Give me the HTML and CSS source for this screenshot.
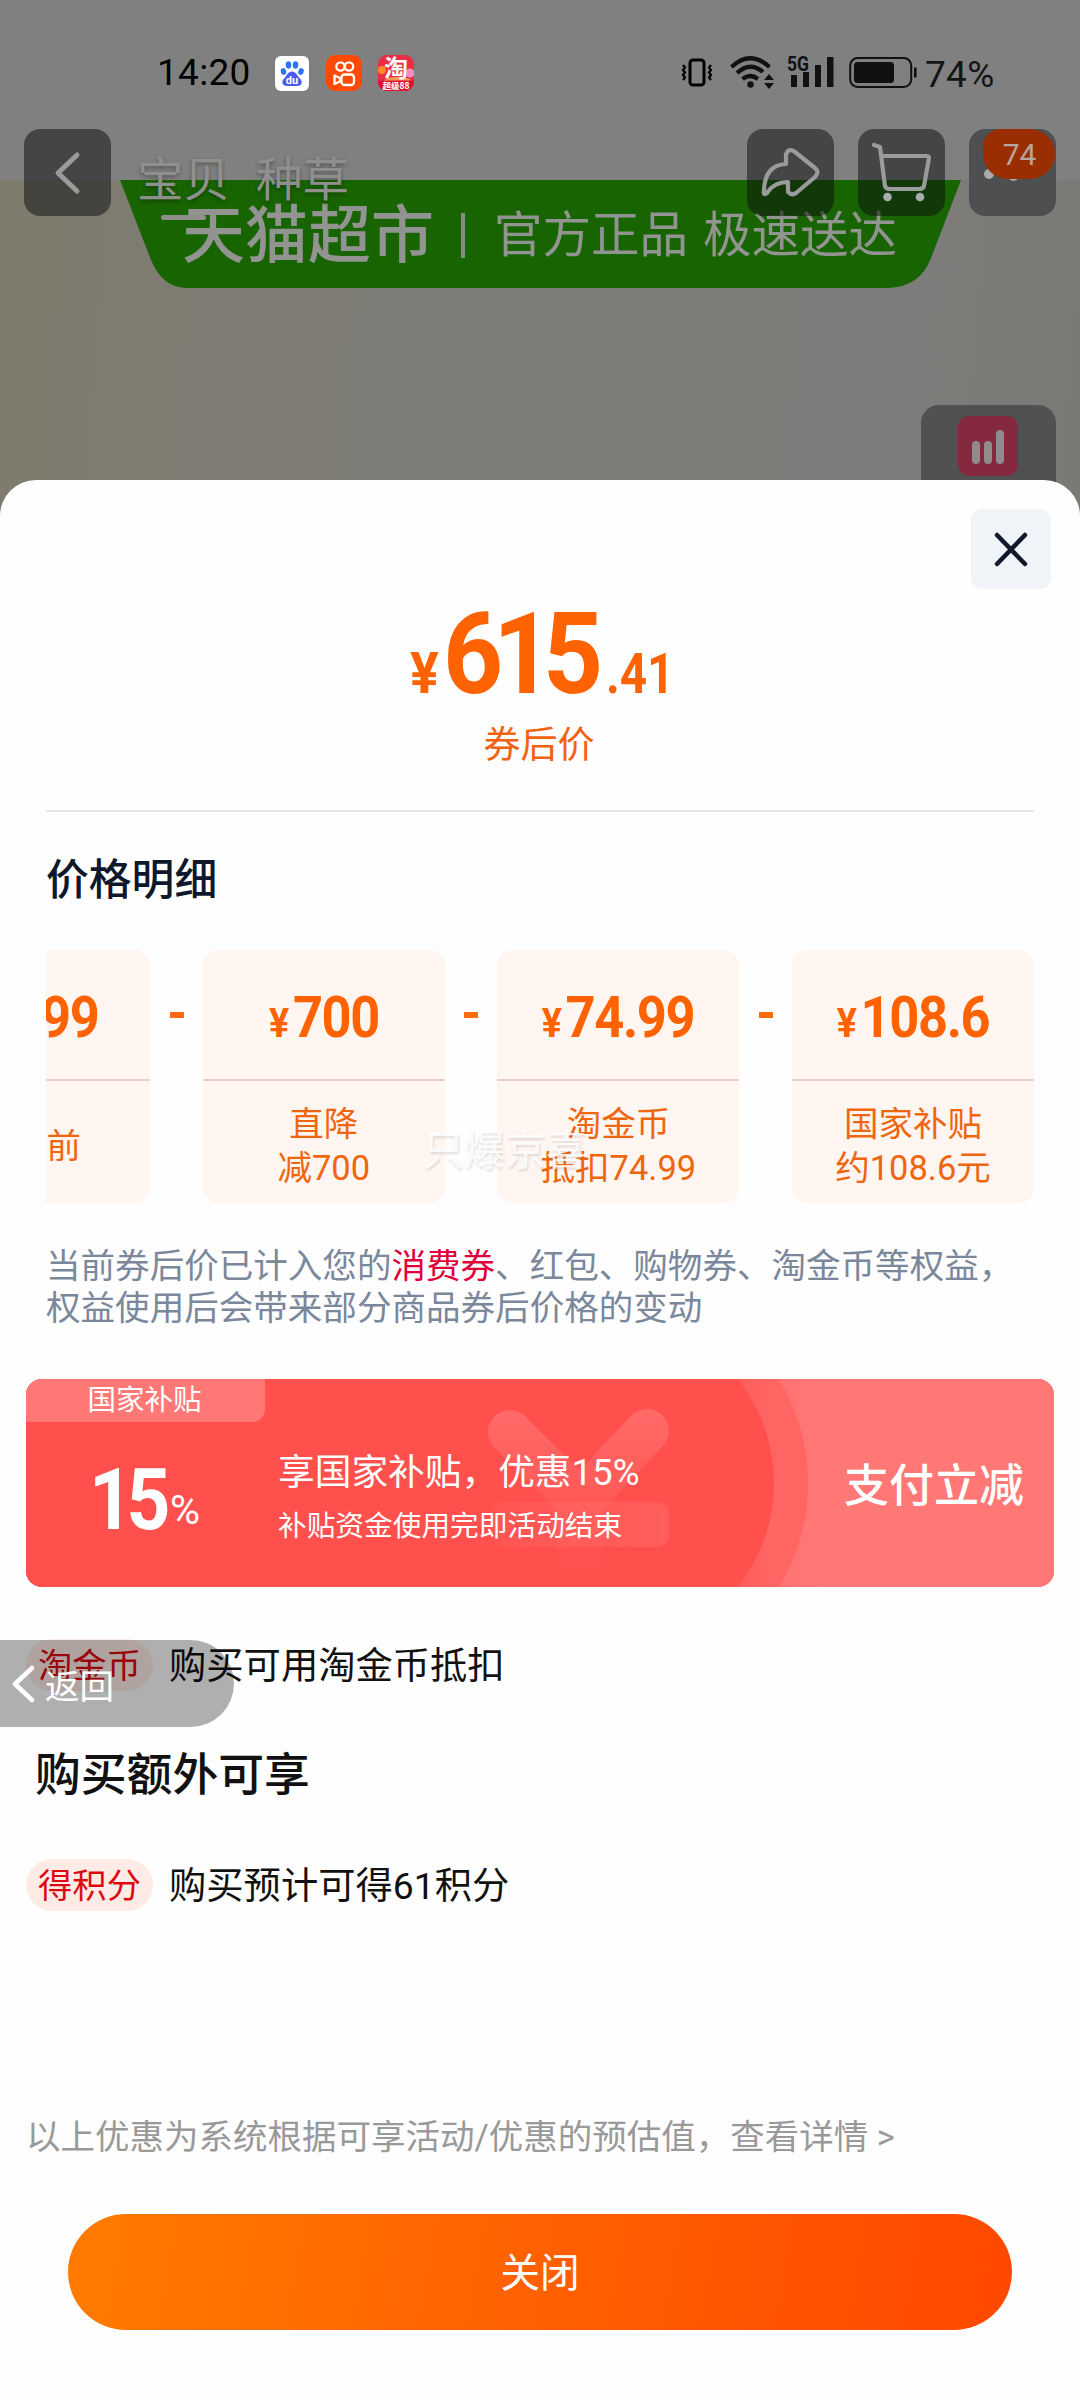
FILE: index.html
```html
<!DOCTYPE html>
<html lang="zh-CN">
<head>
<meta charset="utf-8">
<title>价格明细</title>
<link rel="stylesheet" href="styles.css">
</head>
<body>
<div class="screen">
  <div class="product-image">
    <svg class="ribbon" width="841" height="108" viewBox="0 0 841 108"><path d="M0 0H841L811 78Q800 107 768 108H66Q42 107 31 80Z"/></svg>
    <div class="ribbon-text"><span class="ribbon-brand">天猫超市</span><i class="ribbon-rule"></i><span class="ribbon-slogan">官方正品<b></b>极速送达</span></div>
  </div>

  <div class="float-tool">
    <svg width="60" height="60" viewBox="0 0 60 60"><rect width="60" height="60" rx="11" fill="#85293f"/><path d="M18 29V44M30 29V44M42 18V44" stroke="#918b8d" stroke-width="8" stroke-linecap="round"/></svg>
  </div>

  <header class="status">
    <span class="clock">14:20</span>
    <svg class="app app-baidu" width="34" height="35" viewBox="0 0 34 35"><rect width="34" height="35" rx="6" fill="#fff"/><g fill="#2f74f0"><ellipse cx="8.500" cy="15.500" rx="2.700" ry="3.400" transform="rotate(-15 8.500 15.500)"/><ellipse cx="13.500" cy="9" rx="2.800" ry="3.700"/><ellipse cx="20.500" cy="9" rx="2.800" ry="3.700"/><ellipse cx="26" cy="15.500" rx="2.700" ry="3.400" transform="rotate(15 26 15.500)"/></g><path d="M17 15.500c4 0 5 4 7.500 6.500 4 4 2 8-2 8H12c-4.500 0-6.500-4-2.500-8 2.500-2.500 3.500-6.500 7.500-6.500z" fill="#4a5cf0"/><text x="17" y="28" text-anchor="middle" class="baidu-text">du</text></svg>
    <svg class="app app-kuaishou" width="36" height="36" viewBox="0 0 36 36"><rect width="36" height="36" rx="9" fill="#ff4a06"/><g fill="none" stroke="#fff" stroke-width="2.300"><circle cx="14.500" cy="11.500" r="4.200"/><circle cx="23" cy="11.500" r="4.200"/><rect x="15.500" y="19.500" width="12.500" height="10.500" rx="3"/><path d="M8.500 20.500v8.500l5.500-2.500v-3.500z" stroke-linejoin="round"/></g></svg>
    <svg class="app" width="36" height="36" viewBox="0 0 36 36"><defs><clipPath id="tb"><rect width="36" height="36" rx="9"/></clipPath></defs><g clip-path="url(#tb)"><rect width="36" height="36" fill="#ea2f45"/><circle cx="4" cy="15" r="4" fill="#ff8a1e"/><circle cx="32" cy="18" r="4.500" fill="#f58ac8"/><path d="M6 25q12-6 26-1v3H6z" fill="#ff9c4a"/><rect y="25.500" width="36" height="11" fill="#de1230"/></g><text x="18" y="21.500" text-anchor="middle" class="tao-text">淘</text><text x="18" y="34" text-anchor="middle" class="tao-sub">超级88</text></svg>

    <svg class="vibrate" width="32" height="30" viewBox="0 0 32 30"><rect x="9" y="2" width="14" height="25" rx="3" fill="none" stroke="#000" stroke-width="3"/><path d="M2 7l2 2.500-2 2.500 2 2.500-2 2.500 2 2.500-2 2.500M30 7l-2 2.500 2 2.500-2 2.500 2 2.500-2 2.500 2 2.500" fill="none" stroke="#000" stroke-width="2.200"/></svg>
    <svg class="wifi" width="45" height="34" viewBox="0 0 45 34"><g fill="none" stroke="#111" stroke-width="4.200"><path d="M1.500 12Q20 -5.500 39.500 12"/><path d="M7 18Q20 6 33 17"/><path d="M12.500 24Q20 18 28 24"/></g><circle cx="20.500" cy="29.500" r="3.200" fill="#111"/><path d="M34 25l5-6 5 6zM34 28h10l-5 6z" fill="#111"/></svg>
    <svg class="signal" width="48" height="34" viewBox="0 0 48 34"><text x="0" y="16.500" class="net-text" textLength="22" lengthAdjust="spacingAndGlyphs">5G</text><path d="M4 21h6v12H4zM16 18h6v15h-6zM28 11h6v22h-6zM40 3h6.500v30H40z" fill="#111"/></svg>
    <svg class="battery" width="68" height="32" viewBox="0 0 68 32"><rect x="1.200" y="2" width="61" height="29" rx="7.500" fill="none" stroke="#111" stroke-width="2"/><rect x="5" y="6" width="40" height="21" rx="3.500" fill="#111"/><path d="M65 11.500h2.600v10H65z" fill="#111"/></svg>
    <span class="level">74%</span>
  </header>

  <nav class="nav">
    <div class="nav-btn"><svg width="87" height="87" viewBox="0 0 87 87"><path d="M53 26L34 44L53 62" class="line thick"/></svg></div>
    <div class="tabs"><span class="tab active">宝贝</span><span class="tab">种草</span></div>
    <div class="nav-btn"><svg width="87" height="87" viewBox="0 0 87 87"><path d="M41 22Q44 20 48 23L68 39Q73 43 68 48L49 64Q45 67 41 63V53Q27 53 20 64Q16 67 17 61Q18 36 39 35V25Z" class="line"/></svg></div>
    <div class="nav-btn"><svg width="87" height="87" viewBox="0 0 87 87"><path d="M16 16L22 18L27 57Q28 60 32 60H61Q65 60 66 57L71 29Q71 27 68 27H24" class="line"/><circle cx="29.500" cy="68" r="4.300" class="dot"/><circle cx="62" cy="68" r="4.300" class="dot"/></svg></div>
    <div class="nav-btn more"><svg width="87" height="87" viewBox="0 0 87 87"><circle cx="20" cy="45" r="5" class="dot"/><circle cx="44.500" cy="47" r="5" class="dot"/></svg><span class="badge">74</span></div>
  </nav>

  <main class="sheet">
    <button class="close-x"><svg width="81" height="80" viewBox="0 0 81 80"><path d="M26 26L54 55M54 26L26 55"/></svg></button>

    <section class="total">
      <div class="price"><span class="price-yen">¥</span><span class="price-int">615</span><span class="price-dec">.41</span></div>
      <div class="price-label">券后价</div>
    </section>

    <h2 class="detail-title">价格明细</h2>
    <div class="cards">
      <div class="card"><div class="num"><small>¥</small><span>1499</span></div><div class="desc">优惠前</div></div>
      <i class="minus"></i>
      <div class="card"><div class="num"><small>¥</small><span>700</span></div><div class="desc">直降<br>减700</div></div>
      <i class="minus"></i>
      <div class="card"><div class="num"><small>¥</small><span>74.99</span></div><div class="desc">淘金币<br>抵扣74.99</div></div>
      <i class="minus"></i>
      <div class="card"><div class="num"><small>¥</small><span>108.6</span></div><div class="desc">国家补贴<br>约108.6元</div></div>
    </div>
    <p class="note">当前券后价已计入您的<em>消费券</em>、红包、购物券、淘金币等权益，<br>权益使用后会带来部分商品券后价格的变动</p>

    <section class="coupon">
      <svg class="coupon-art" width="1028" height="208" viewBox="0 0 1028 208">
        <defs>
          <linearGradient id="ring" x1="0" x2="1"><stop offset=".72" stop-color="#ff5250"/><stop offset=".9" stop-color="#ff6563"/></linearGradient>
          <linearGradient id="side" x1="0" x2="1"><stop offset="0" stop-color="#ff6c6a"/><stop offset=".3" stop-color="#ff7876"/></linearGradient>
          <linearGradient id="mark" gradientUnits="userSpaceOnUse" x1="520" y1="30" x2="520" y2="200"><stop offset="0" stop-color="#fff" stop-opacity=".15"/><stop offset=".6" stop-color="#fff" stop-opacity=".04"/><stop offset="1" stop-color="#fff" stop-opacity="0"/></linearGradient>
          <linearGradient id="bar" x1="0" x2="1"><stop offset="0" stop-color="#fff" stop-opacity=".03"/><stop offset="1" stop-color="#fff" stop-opacity=".08"/></linearGradient>
        </defs>
        <rect x="700" width="328" height="208" fill="url(#side)"/>
        <circle cx="582" cy="104" r="200" fill="url(#ring)"/>
        <circle cx="581" cy="104" r="167" fill="#ff504e"/>
        <rect width="560" height="208" fill="#ff504e"/>
        <path d="M484 53L554 123L621 52M554 123V208" fill="none" stroke="url(#mark)" stroke-width="44" stroke-linecap="round" stroke-linejoin="round"/>
        <rect x="466" y="123" width="177" height="45" rx="12" fill="url(#bar)"/>
      </svg>
      <div class="coupon-left"><span class="coupon-tab">国家补贴</span><div class="rate"><b>15</b><span>%</span></div></div>
      <div class="coupon-mid"><div class="coupon-main">享国家补贴，优惠15%</div><div class="coupon-sub">补贴资金使用完即活动结束</div></div>
      <div class="coupon-right">支付立减</div>
    </section>

    <div class="perk"><span class="tag">淘金币</span><span class="perk-text">购买可用淘金币抵扣</span></div>
    <h2 class="extra-title">购买额外可享</h2>
    <div class="perk"><span class="tag">得积分</span><span class="perk-text">购买预计可得61积分</span></div>

    <p class="foot">以上优惠为系统根据可享活动/优惠的预估值，查看详情 &gt;</p>
    <button class="close-btn">关闭</button>
  </main>

  <div class="watermark">只爆京喜</div>
  <div class="back-pill"><svg width="24" height="38" viewBox="0 0 24 38"><path d="M20 3L3 19L20 35"/></svg><span>返回</span></div>
</div>
</body>
</html>
```
FILE: styles.css
```css
* { box-sizing: border-box; }
body { margin: 0; font-family: Roboto, "Noto Sans CJK SC", sans-serif; }
h2, p { margin: 0; font-weight: 400; }
button { border: 0; padding: 0; font: inherit; }
svg { display: block; flex: none; }

.screen { position: relative; width: 1080px; height: 2400px; overflow: hidden; background: #808080; display: flex; flex-direction: column; }

/* dimmed product page behind the sheet */
.product-image { position: absolute; left: 0; top: 180px; width: 1080px; height: 360px; background: linear-gradient(95deg, #7f7b6c 0%, #7e7c74 25%, #7c7d79 55%, #7d7d7b 80%, #7b7976 100%); }
.ribbon { position: absolute; left: 120px; top: 0; fill: #186400; }
.ribbon-text { position: absolute; left: 182px; top: 20px; height: 70px; display: flex; align-items: center; color: #929491; white-space: nowrap; }
.ribbon-brand { font-size: 63px; font-weight: 500; line-height: 70px; padding-top: 2px; }
.ribbon-rule { width: 4px; height: 45px; margin: 0 29px 0 27px; background: #84917e; }
.ribbon-slogan { font-size: 48.500px; display: flex; padding-bottom: 9px; }
.ribbon-slogan b { width: 15px; }
.float-tool { position: absolute; left: 921px; top: 405px; width: 135px; height: 110px; padding: 11px 1px 0 0; border-radius: 18px; background: #515151; display: flex; justify-content: center; }

.status { position: relative; height: 129px; padding: 54px 0 0 157px; display: flex; align-items: flex-start; }
.clock { width: 118px; font-size: 37px; line-height: 38px; letter-spacing: .3px; color: #000; }
.app { margin: 1px 16px 0 0; }
.app-baidu { margin: 2px 17px 0 0; }
.baidu-text { font: 700 11px Roboto, sans-serif; fill: #fff; }
.tao-text { font: 700 24px "Noto Sans CJK SC", sans-serif; fill: #fff; }
.tao-sub { font: 700 8.500px "Noto Sans CJK SC", sans-serif; fill: #fff; }
.net-text { font: 700 20px Roboto, sans-serif; fill: #111; }
.vibrate { margin: 4px 17px 0 251px; }
.wifi { margin: 1px 12px 0 0; }
.signal { margin: 0 14px 0 0; }
.battery { margin: 2px 8px 0 0; }
.level { font-size: 37px; line-height: 42px; letter-spacing: .3px; color: #151515; }

.nav { position: relative; height: 87px; padding: 0 24px; display: flex; gap: 24px; }
.nav-btn { width: 87px; height: 87px; flex: none; border-radius: 16px; background: rgba(14, 16, 20, .52); overflow: hidden; }
.line { fill: none; stroke: #999b9c; stroke-width: 4.200; stroke-linecap: round; stroke-linejoin: round; }
.thick { stroke-width: 5; }
.dot { fill: #a9abac; }
.tabs { flex: 1; display: flex; gap: 26px; padding: 24px 0 0 2px; }
.tab { height: 70px; font-size: 46.500px; line-height: 54px; color: #8f908e; text-shadow: 0 2px 4px rgba(0, 0, 0, .35); display: flex; flex-direction: column; align-items: center; white-space: nowrap; }
.active::after { content: ""; width: 45px; height: 5px; margin-top: 8px; border-radius: 3px; background: #8f908e; }
.more { position: relative; background: #4d4f50; }
.badge { position: absolute; right: 1px; top: 0; width: 72px; height: 50px; padding-left: 1px; border-radius: 18px 25px 25px 25px; background: #9a2e00; color: #b5a69f; font-size: 30px; line-height: 51px; text-align: center; }

.sheet { position: relative; flex: 1; margin-top: 264px; border-radius: 36px 36px 0 0; background: #fefefe; }
.close-x { position: absolute; right: 29px; top: 29px; width: 80px; height: 80px; border-radius: 11px; background: #f0f4f8; }
.close-x path { stroke: #111a2c; stroke-width: 4.500; stroke-linecap: round; }

.total { height: 332px; margin: 0 46px; padding-top: 117px; border-bottom: 2px solid #e4e4e5; color: #ff6200; }
.price { display: flex; align-items: baseline; justify-content: center; font-weight: 700; line-height: 114px; height: 114px; padding-right: 2px; }
.price span { transform-origin: left; }
.price-yen { width: 33px; font-size: 58px; transform: scaleX(.93); }
.price-int { width: 163px; font-size: 114px; letter-spacing: -11px; transform: scaleX(.92); }
.price-dec { width: 62px; font-size: 56px; transform: scaleX(.85); }
.price-label { margin-top: 14px; padding-right: 2px; text-align: center; font-size: 37px; line-height: 42px; color: #f26210; }

.detail-title { margin: 43px 0 0 46px; font-size: 42.800px; line-height: 50px; font-weight: 500; color: #0f172a; }
.cards { height: 253px; margin: 45px 46px 0; overflow: hidden; display: flex; justify-content: flex-end; }
.card { width: 242px; height: 253px; flex: none; border-radius: 15px; background: #fff6f2; overflow: hidden; }
.minus { flex: none; width: 14px; height: 6px; margin: 62px 19.300px 0; background: #ff6a0c; }
.num { height: 131px; padding-top: 5px; border-bottom: 2px solid #eccdd0; display: flex; align-items: baseline; justify-content: center; gap: 4px; line-height: 126px; font-size: 57px; font-weight: 700; color: #ff6200; transform: scaleX(.92); }
.card .num { width: 270px; margin-left: -14px; }
.num span { letter-spacing: -1.500px; }
.num small { font-size: 41px; }
.desc { height: 122px; display: flex; align-items: center; justify-content: center; text-align: center; padding-top: 8px; font-size: 34.500px; line-height: 44.500px; color: #f0660f; }
.note { margin: 42px 0 0 46px; font-size: 34.550px; line-height: 42px; color: #7b879b; white-space: nowrap; }
.note em { font-style: normal; color: #e0003a; }

.coupon { position: relative; height: 208px; margin: 50px 26px 0; border-radius: 16px; overflow: hidden; background: #ff504e; color: #fff; display: flex; }
.coupon-art { position: absolute; left: 0; top: 0; }
.coupon-left, .coupon-mid, .coupon-right { position: relative; }
.coupon-left { width: 252px; }
.coupon-tab { display: block; width: 239px; height: 43px; padding-right: 2px; border-radius: 0 0 13px 0; background: #ff7876; font-size: 28.500px; line-height: 43px; text-align: center; }
.rate { display: flex; align-items: baseline; padding-left: 63px; line-height: 100px; margin-top: 28px; }
.rate b { width: 80px; font-size: 85px; letter-spacing: -7px; transform: scaleX(.9); transform-origin: left; }
.rate span { font-size: 41px; padding: 0 0 5px 1px; transform: translateY(-5px); }
.coupon-mid { width: 550px; padding-top: 71px; white-space: nowrap; }
.coupon-main { font-size: 36.700px; line-height: 46px; }
.coupon-sub { font-size: 28.700px; line-height: 40px; margin-top: 10px; }
.coupon-right { padding: 81px 0 0 16px; font-size: 45px; line-height: 54px; font-weight: 500; white-space: nowrap; }

.perk { display: flex; align-items: center; height: 52px; margin: 52px 0 0 26px; gap: 16px; white-space: nowrap; }
.tag { width: 127px; height: 52px; border-radius: 26px; background: #ffebe6; color: #dc0a12; font-size: 34.300px; line-height: 55px; text-align: center; }
.perk-text { font-size: 37.300px; line-height: 52px; color: #111; padding-top: 1px; }
.extra-title { margin: 57px 0 0 35px; font-size: 45.800px; line-height: 56px; font-weight: 500; color: #111; }
.foot { margin: 203px 0 0 26px; font-size: 34.500px; line-height: 46px; color: #999; white-space: nowrap; }
.close-btn { display: block; width: 944px; height: 116px; margin: 54px auto 0; border-radius: 58px; background: linear-gradient(100deg, #ff7b00, #ff6000 50%, #ff4800); color: #fff; font-size: 39.500px; line-height: 120px; }
.extra-title + .perk { margin-top: 55px; }

.watermark { position: absolute; left: 423px; top: 1124px; font-size: 41px; line-height: 54px; color: rgba(255, 255, 255, .85); text-shadow: 1px 2px 3px rgba(0, 0, 0, .13); white-space: nowrap; }
.back-pill { position: absolute; left: 0; top: 1640px; width: 234px; height: 87px; padding-left: 12px; border-radius: 0 44px 44px 0; background: rgba(0, 0, 0, .31); display: flex; align-items: center; gap: 9px; color: #fff; font-size: 34.500px; }
.back-pill path { fill: none; stroke: #fff; stroke-width: 4.500; stroke-linecap: round; stroke-linejoin: round; }
```
